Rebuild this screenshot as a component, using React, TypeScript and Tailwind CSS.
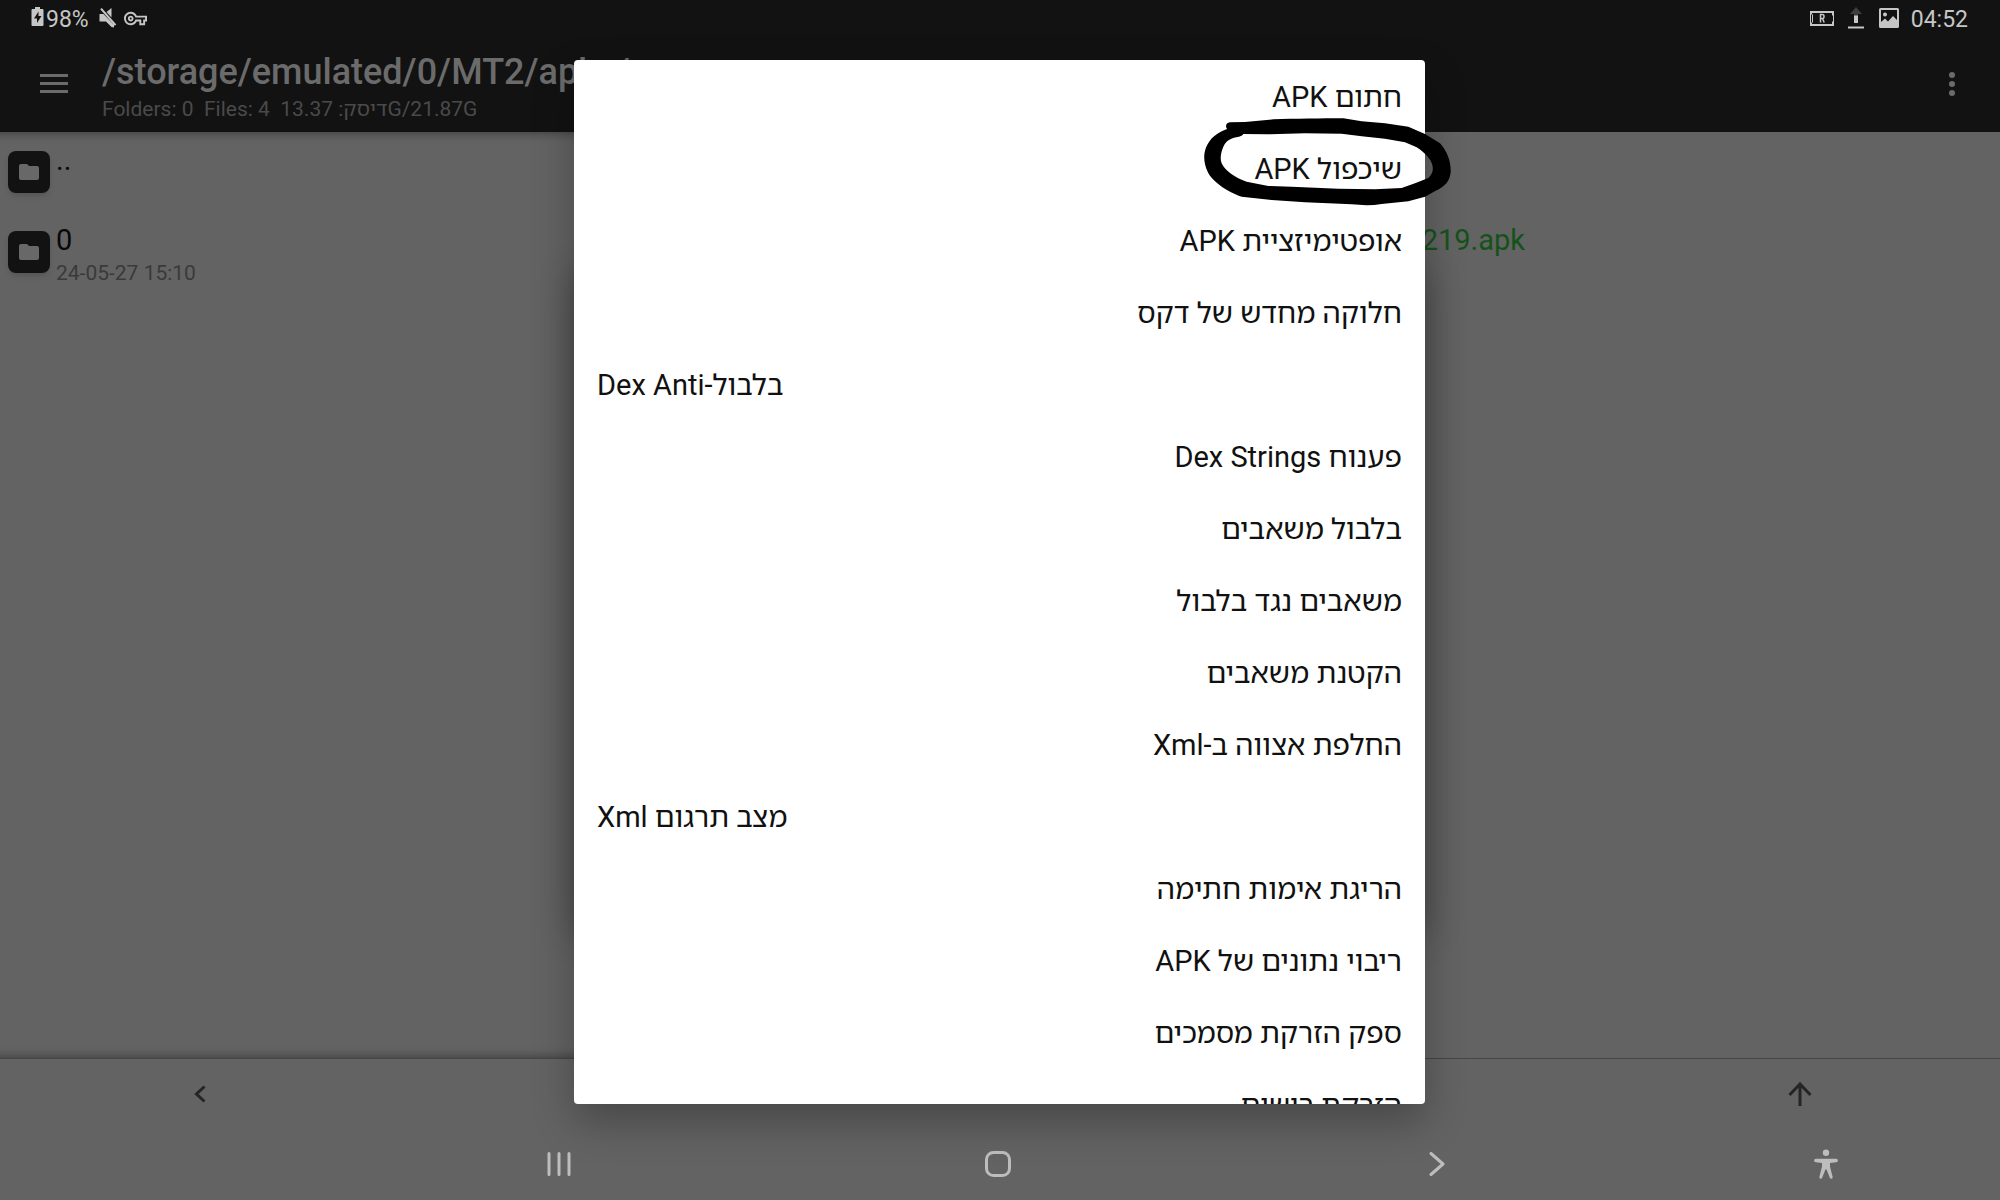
import { MdFolder, MdOutlineVpnKey } from 'react-icons/md';

type Item = { label: string };

const MENU_ITEMS: Item[] = [
  { label: 'חתום APK' },
  { label: 'שיכפול APK' },
  { label: 'אופטימיזציית APK' },
  { label: 'חלוקה מחדש של דקס' },
  { label: 'Dex Anti-בלבול' },
  { label: 'פענוח Dex Strings' },
  { label: 'בלבול משאבים' },
  { label: 'משאבים נגד בלבול' },
  { label: 'הקטנת משאבים' },
  { label: 'החלפת אצווה ב-Xml' },
  { label: 'Xml מצב תרגום' },
  { label: 'הריגת אימות חתימה' },
  { label: 'ריבוי נתונים של APK' },
  { label: 'ספק הזרקת מסמכים' },
  { label: 'הזרקת רישום' },
];

function StatusBar() {
  return (
    <div className="flex h-9 items-center justify-between pr-8 pl-[31px] text-[#c6c6c6]">
      <div className="flex items-center">
        <svg viewBox="0 0 13 19" className="mb-[3px] h-[19px] w-[13px]" fill="currentColor">
          <path fillRule="evenodd" d="M4 0h5v2h2.500q1 0 1 1v15q0 1-1 1h-10q-1 0-1-1V3q0-1 1-1H4zM7.500 4.500l-4.500 7h3v4.500l4.500-7h-3z" />
        </svg>
        <span className="ml-[2px] pt-1 text-[23px] leading-9">98%</span>
        <svg viewBox="0 0 18 20" className="ml-[10px] h-[20px] w-[18px]" fill="currentColor">
          <path d="M.5 6h4L15 17v2.500L12.500 19 7 13.500H.5zM7.500 4L12.500 0v9.500zM1.200 1.200L2.800 0l14.500 16.500-1.600 1.300z" />
        </svg>
        <MdOutlineVpnKey className="ml-[7px] size-[23px]" />
      </div>
      <div className="flex items-center">
        <svg viewBox="0 0 24 15" className="h-[15px] w-[24px]" fill="none" stroke="currentColor" strokeWidth="2">
          <path d="M1 3.500V1h22v3.500M23 10.500V14H1v-2.500" />
          <path strokeWidth="1" d="M.5 3v9M2.500 3.500v8M23.500 4v7" />
          <path strokeWidth="1.500" d="M10.500 11.500v-8h2q1.500 0 1.500 2t-1.500 2h-2M12.500 7.500l1.700 4" />
        </svg>
        <svg viewBox="0 0 16 22" className="ml-[14px] h-[22px] w-[16px]" fill="currentColor">
          <path fill="#3d3d3d" d="M8 0l6 7h-4v2H6V7H2z" />
          <path d="M6 8.500h4V16H6zM0 19.500h16v2H0z" />
        </svg>
        <svg viewBox="0 0 20 20" className="ml-[15px] h-[20px] w-[20px]" fill="currentColor">
          <path fillRule="evenodd" d="M1.500 0h17Q20 0 20 1.500v17q0 1.500-1.500 1.500h-17Q0 20 0 18.500v-17Q0 0 1.500 0zM2 2v12l4-3.500 3 3 5-5.500 4 4V2zM6 4.500a2 2 0 1 0 .01 0z" />
        </svg>
        <span className="ml-[12px] pt-1 text-[23px] leading-9">04:52</span>
      </div>
    </div>
  );
}

function AppBar() {
  return (
    <header className="flex h-24 items-center text-[#6b6b6b]">
      <button aria-label="Menu" className="flex w-[102px] justify-center pl-[6px]">
        <svg viewBox="0 0 28 20" className="h-5 w-7" fill="currentColor">
          <path d="M0 0h28v3H0zM0 8h28v3H0zM0 16h28v3H0z" />
        </svg>
      </button>
      <div className="flex-1 pt-2">
        <h1 className="text-[36px] font-medium leading-[42px]">/storage/emulated/0/MT2/apks/</h1>
        <p className="whitespace-pre text-[21px] leading-8 text-[#4a4a4a]">
          {'Folders: 0  Files: 4  דיסק: 13.37G/21.87G'}
        </p>
      </div>
      <button aria-label="More options" className="flex w-[96px] justify-center">
        <svg viewBox="0 0 6 24" className="h-6 w-[6px]" fill="currentColor">
          <circle cx="3" cy="3" r="3" />
          <circle cx="3" cy="12" r="3" />
          <circle cx="3" cy="21" r="3" />
        </svg>
      </button>
    </header>
  );
}

function FolderRow({ name, date }: { name: string; date?: string }) {
  return (
    <li className="flex h-20 items-center gap-[6px] pl-2">
      <div className="flex size-[42px] items-center justify-center rounded-lg bg-[#121212] shadow-md">
        <MdFolder className="size-6 text-[#686868]" />
      </div>
      <div className="h-[58px]">
        <p className="text-[29px] leading-[34px] text-[#080808]">{name}</p>
        {date && <p className="text-[21px] leading-8 text-[#3a3a3a]">{date}</p>}
      </div>
    </li>
  );
}

// Left pane is the active one, it carries the inner shadow
function Panes() {
  return (
    <main className="grid min-h-0 flex-1 grid-cols-2">
      <ul className="shadow-[inset_0_12px_8px_-10px_#424242,inset_0_-12px_8px_-10px_#424242]">
        <FolderRow name=".." />
        <FolderRow name="0" date="24-05-27 15:10" />
      </ul>
      <ul className="pt-20">
        <li className="flex h-20 items-center">
          <div className="h-[58px] w-[525px] text-right">
            <p className="text-[29px] leading-[34px] text-[#15521a]">219.apk</p>
          </div>
        </li>
      </ul>
    </main>
  );
}

function Toolbar() {
  return (
    <div className="grid h-[70px] grid-cols-5 border-t border-[#454545] text-[#252525]">
      <button aria-label="Back" className="flex items-center justify-center">
        <svg viewBox="0 0 12 18" className="h-[18px] w-3" fill="none" stroke="currentColor" strokeWidth="3">
          <path d="M10.500 1.500L2.500 9l8 7.500" />
        </svg>
      </button>
      <span />
      <span />
      <span />
      <button aria-label="Up" className="flex items-center justify-center">
        <svg viewBox="0 0 24 24" className="size-6" fill="none" stroke="currentColor" strokeWidth="3">
          <path d="M12 24V2.500M1.500 13L12 2l10.500 11" />
        </svg>
      </button>
    </div>
  );
}

function NavBar() {
  return (
    <nav className="grid h-[72px] grid-cols-[17fr_22fr_22fr_22fr_17fr] pr-1 text-[#bdbdbd]">
      <span />
      <button aria-label="Recent apps" className="flex items-center justify-center">
        <svg viewBox="0 0 24 24" className="size-6" fill="none" stroke="currentColor" strokeWidth="3" strokeLinecap="round">
          <path d="M2 1.500v21M12 1.500v21M22 1.500v21" />
        </svg>
      </button>
      <button aria-label="Home" className="flex items-center justify-center">
        <svg viewBox="0 0 26 26" className="size-[26px]" fill="none" stroke="currentColor" strokeWidth="3">
          <rect x="1.500" y="1.500" width="23" height="23" rx="7" />
        </svg>
      </button>
      <button aria-label="Back" className="flex items-center justify-center">
        <svg viewBox="0 0 16 24" className="h-6 w-4" fill="none" stroke="currentColor" strokeWidth="3" strokeLinecap="round" strokeLinejoin="round">
          <path d="M2 1.500L14 12 2 22.500" />
        </svg>
      </button>
      <button aria-label="Accessibility" className="flex items-center justify-center">
        <svg viewBox="0 -2 24 30" className="h-[30px] w-6" fill="currentColor">
          <circle cx="12" cy="1.800" r="3.200" />
          <path d="M1.800 7.800h20.400a1.700 1.700 0 0 1 0 3.400L16 12v3.500l2.600 10.300q.3 1.500-1 2-1.300.3-1.900-1.200L12.600 18.500h-1.200l-3.100 8.100q-.6 1.500-1.900 1.200-1.300-.5-1-2L8 15.500V12l-6.200-.8a1.700 1.700 0 0 1 0-3.400z" />
        </svg>
      </button>
    </nav>
  );
}

function MenuDialog() {
  return (
    <div className="absolute inset-0 flex flex-col items-center pt-[60px] pr-px pb-[96px]">
      <div role="dialog" className="relative h-full w-full max-w-[851px] rounded shadow-[0_18px_40px_rgba(0,0,0,0.28)]">
        <ul className="h-full overflow-hidden rounded bg-white pt-px">
          {MENU_ITEMS.map((item) => (
            <li key={item.label}>
              <button dir="auto" className="block h-[72px] w-full px-[23px] text-start text-[29px] leading-[72px] text-[#111]">
                {item.label}
              </button>
            </li>
          ))}
        </ul>
        {/* Hand drawn marker around the clone entry */}
        <svg viewBox="27 24 741 264" className="pointer-events-none absolute -right-[26px] top-[58px] h-[88px] w-[247px]">
          <path
            fillRule="evenodd"
            d="M93 50Q93 38 105 37L150 36L235 28C300 26 380 25 445 25L500 34L570 40L640 50L690 72L735 100C757 125 768 155 767 185C765 212 750 230 722 242L690 260L640 274L560 282C530 287 500 286 470 283L330 277L230 270L140 260C95 245 50 212 38 185C28 165 25 140 30 122C38 95 55 72 96 57ZM145 72L215 73L330 70L440 71L500 79L570 86L630 97L665 112C690 128 708 148 712 165C716 182 712 192 700 204L660 220L620 234L540 238L430 236L290 230L220 228L155 215C120 204 90 182 80 160C74 146 78 125 86 108C92 95 105 84 128 81Q142 78 145 72Z"
          />
        </svg>
      </div>
    </div>
  );
}

export default function App() {
  return (
    <div className="relative flex h-screen flex-col overflow-hidden bg-[#636363] font-[Roboto,'Noto_Sans_Hebrew','Open_Sans',sans-serif]">
      <div className="bg-[#121212]">
        <StatusBar />
        <AppBar />
      </div>
      <Panes />
      <Toolbar />
      <NavBar />
      {/* Dialog that opened the menu, only its shadow shows */}
      <div className="absolute inset-0 flex items-center justify-center pr-px">
        <div className="h-[660px] w-full max-w-[851px] rounded shadow-[0_4px_36px_rgba(0,0,0,0.3)]" />
      </div>
      <MenuDialog />
    </div>
  );
}
